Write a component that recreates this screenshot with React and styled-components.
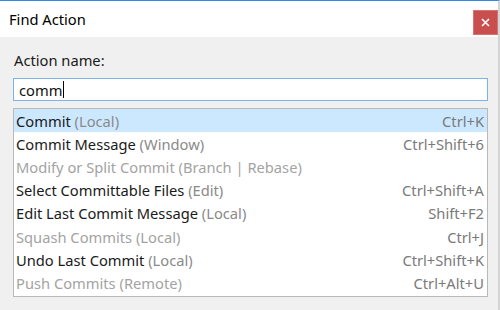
import React from "react";
import styled, { createGlobalStyle } from "styled-components";

const Global = createGlobalStyle`
  html, body { margin: 0; padding: 0; background: #f0f0f0; }
  body { font-family: "Noto Sans", "Open Sans", sans-serif; }
`;

const Window = styled.div`
  width: 500px;
  height: 310px;
  box-sizing: border-box;
  border-top: 1px solid #2e8ae6;
  border-right: 2px solid #d4d4d4;
  background: #f0f0f0;
  display: flex;
  flex-direction: column;
  overflow: hidden;
`;

const TitleBar = styled.div`
  height: 36px;
  background: #ffffff;
  display: flex;
  align-items: center;
  justify-content: space-between;
  padding-left: 9px;
  flex: none;
`;

const Title = styled.div`
  font-size: 14.7px;
  color: #000;
`;

const CloseButton = styled.div`
  width: 25px;
  height: 25px;
  background: #c94f4f;
  border: 1px solid #d97272;
  box-sizing: border-box;
  display: flex;
  align-items: center;
  justify-content: center;
  margin-top: 7px;
`;

const Body = styled.div`
  flex: 1;
  padding: 13px 10px 0 13px;
  display: flex;
  flex-direction: column;
`;

const Label = styled.div`
  font-size: 14.7px;
  color: #1a1a1a;
  padding-left: 1px;
  height: 28px;
`;

const Input = styled.div`
  height: 23px;
  box-sizing: border-box;
  border: 1px solid #7ab4ea;
  background: #fff;
  display: flex;
  align-items: center;
  padding-left: 5px;
  font-size: 14.7px;
  color: #111;
`;

const Caret = styled.span`
  display: inline-block;
  width: 1px;
  height: 17px;
  background: #000;
  margin-left: 1px;
`;

const List = styled.div`
  margin-top: 7px;
  height: 189px;
  box-sizing: border-box;
  border: 1px solid #b9b9b9;
  background: #fff;
  display: flex;
  flex-direction: column;
`;

const Row = styled.div`
  height: 23.2px;
  display: flex;
  align-items: center;
  justify-content: space-between;
  padding: 0 3px 0 2px;
  font-size: 14.7px;
  background: ${(p) => (p.$selected ? "#cce8ff" : "transparent")};
  white-space: nowrap;
`;

const Name = styled.span`
  color: ${(p) => (p.$disabled ? "#a3a3a3" : "#1a1a1a")};
`;

const Group = styled.span`
  color: ${(p) => (p.$disabled ? "#a3a3a3" : "#8a8a8a")};
`;

const Shortcut = styled.span`
  color: #7a7a7a;
`;

const items = [
  { name: "Commit", group: "(Local)", key: "Ctrl+K", selected: true },
  { name: "Commit Message", group: "(Window)", key: "Ctrl+Shift+6" },
  { name: "Modify or Split Commit", group: "(Branch | Rebase)", key: "", disabled: true },
  { name: "Select Committable Files", group: "(Edit)", key: "Ctrl+Shift+A" },
  { name: "Edit Last Commit Message", group: "(Local)", key: "Shift+F2" },
  { name: "Squash Commits", group: "(Local)", key: "Ctrl+J", disabled: true },
  { name: "Undo Last Commit", group: "(Local)", key: "Ctrl+Shift+K" },
  { name: "Push Commits", group: "(Remote)", key: "Ctrl+Alt+U", disabled: true },
];

export default function App() {
  return (
    <>
      <Global />
      <Window>
        <TitleBar>
          <Title>Find Action</Title>
          <CloseButton>
            <svg width="9" height="9" viewBox="0 0 9 9">
              <path d="M1 1 L8 8 M8 1 L1 8" stroke="#fff" strokeWidth="1.6" />
            </svg>
          </CloseButton>
        </TitleBar>
        <Body>
          <Label>Action name:</Label>
          <Input>
            comm<Caret />
          </Input>
          <List>
            {items.map((it) => (
              <Row key={it.name} $selected={it.selected}>
                <span>
                  <Name $disabled={it.disabled}>{it.name}</Name>{" "}
                  <Group $disabled={it.disabled}>{it.group}</Group>
                </span>
                <Shortcut>{it.key}</Shortcut>
              </Row>
            ))}
          </List>
        </Body>
      </Window>
    </>
  );
}
